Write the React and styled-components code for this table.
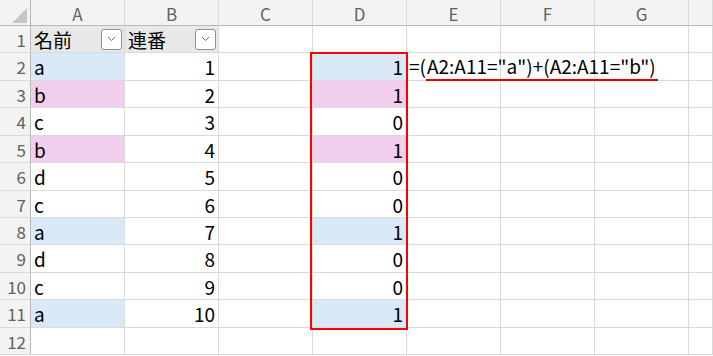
import React from "react";
import styled, { createGlobalStyle } from "styled-components";

const GlobalStyle = createGlobalStyle`
  html, body {
    margin: 0;
    padding: 0;
    background: #ffffff;
  }
  body {
    font-family: "Noto Sans CJK JP", "Noto Sans", sans-serif;
    overflow: hidden;
  }
`;

const COLS = ["A", "B", "C", "D", "E", "F", "G", ""];
const ROW_HEIGHTS = [27, 28, 27, 28, 27, 28, 27, 27, 28, 27, 28, 27];
const TEMPLATE_ROWS = "26px " + ROW_HEIGHTS.map((h) => h + "px").join(" ");

const names = ["a", "b", "c", "b", "d", "c", "a", "d", "c", "a"];
const tone = { a: "blue", b: "pink" };

const App = () => {
  return (
    <>
      <GlobalStyle />
      <Frame>
        <Sheet>
          <Corner>
            <svg width="15" height="15" viewBox="0 0 15 15">
              <polygon points="15,0 15,15 0,15" fill="#c6c6c6" />
            </svg>
          </Corner>
          {COLS.map((c, i) => (
            <ColHead key={"h" + i}>{c}</ColHead>
          ))}

          {/* row 1: table header */}
          <RowHead>1</RowHead>
          <Cell $bg="head">
            <span>名前</span>
            <FilterButton />
          </Cell>
          <Cell $bg="head">
            <span>連番</span>
            <FilterButton />
          </Cell>
          {COLS.slice(2).map((_, i) => (
            <Cell key={"r1" + i} />
          ))}

          {names.map((n, i) => {
            const row = i + 2;
            const t = tone[n];
            return (
              <React.Fragment key={row}>
                <RowHead>{row}</RowHead>
                <Cell $bg={t}>{n}</Cell>
                <Cell $align="right">{i + 1}</Cell>
                <Cell />
                <Cell $bg={t} $align="right">
                  {t ? 1 : 0}
                </Cell>
                <Cell $overflow={row === 2}>
                  {row === 2 && (
                    <Formula>
                      =(<Marked>A2:A11="a")+(A2:A11="b")</Marked>
                    </Formula>
                  )}
                </Cell>
                <Cell />
                <Cell />
                <Cell />
              </React.Fragment>
            );
          })}

          <RowHead>12</RowHead>
          {COLS.map((_, i) => (
            <Cell key={"r12" + i} />
          ))}
        </Sheet>

        <Overlay>
          <RangeBox />
        </Overlay>
      </Frame>
    </>
  );
};

const FilterButton = () => (
  <FilterBox>
    <svg width="9" height="6" viewBox="0 0 9 6">
      <path d="M1 1 L4.5 4.5 L8 1" fill="none" stroke="#6a6a6a" strokeWidth="1" />
    </svg>
  </FilterBox>
);

export default App;

const Frame = styled.div`
  position: relative;
  width: 713px;
  height: 356px;
  overflow: hidden;
`;

const Sheet = styled.div`
  display: grid;
  grid-template-columns: 31px repeat(7, 94px) 1fr;
  grid-template-rows: ${TEMPLATE_ROWS};
  width: 100%;
  height: 100%;
  color: #000000;
`;

const Overlay = styled.div`
  position: absolute;
  inset: 0;
  display: grid;
  grid-template-columns: 31px repeat(7, 94px) 1fr;
  grid-template-rows: ${TEMPLATE_ROWS};
  pointer-events: none;
  z-index: 2;
`;

const Corner = styled.div`
  background: #f3f3f3;
  border-right: 1px solid #b9b9b9;
  border-bottom: 1px solid #b9b9b9;
  display: flex;
  align-items: flex-end;
  justify-content: flex-end;
  padding: 0 3px 2px 0;
`;

const ColHead = styled.div`
  background: #f3f3f3;
  border-right: 1px solid #dadada;
  border-bottom: 1px solid #b9b9b9;
  color: #616161;
  display: flex;
  align-items: center;
  justify-content: center;
  font-size: 17px;
  padding-top: 1px;
`;

const RowHead = styled.div`
  background: #f3f3f3;
  border-right: 1px solid #b9b9b9;
  border-bottom: 1px solid #dadada;
  color: #616161;
  display: flex;
  align-items: center;
  justify-content: flex-end;
  padding-right: 4px;
  font-size: 17px;
`;

const bgs = {
  head: "#e8e8e8",
  blue: "#dae9f8",
  pink: "#f2ceef",
};

const Cell = styled.div`
  background: ${(p) => bgs[p.$bg] || "#ffffff"};
  border-right: 1px solid #dadada;
  border-bottom: 1px solid #dadada;
  display: flex;
  align-items: center;
  justify-content: ${(p) => (p.$align === "right" ? "flex-end" : "space-between")};
  padding: 0 3px 0 3px;
  white-space: nowrap;
  overflow: ${(p) => (p.$overflow ? "visible" : "hidden")};
  position: relative;
  z-index: ${(p) => (p.$overflow ? 1 : 0)};
  font-size: 19px;
  line-height: 1;
  box-sizing: border-box;
`;

const FilterBox = styled.div`
  width: 21px;
  height: 21px;
  box-sizing: border-box;
  border: 1px solid #8f8f8f;
  border-radius: 3px;
  background: #ffffff;
  display: flex;
  align-items: center;
  justify-content: center;
  margin-right: -1px;
`;

const Formula = styled.span`
  margin-left: -1px;
  margin-top: 4px;
`;

const Marked = styled.span`
  display: inline-block;
  padding: 0 2px 4px 1px;
  border-bottom: 2px solid #e60000;
`;

const RangeBox = styled.div`
  grid-column: 5;
  grid-row: 3 / 13;
  margin: -1px -1px -2px -3px;
  border: 2px solid #ff0000;
`;
